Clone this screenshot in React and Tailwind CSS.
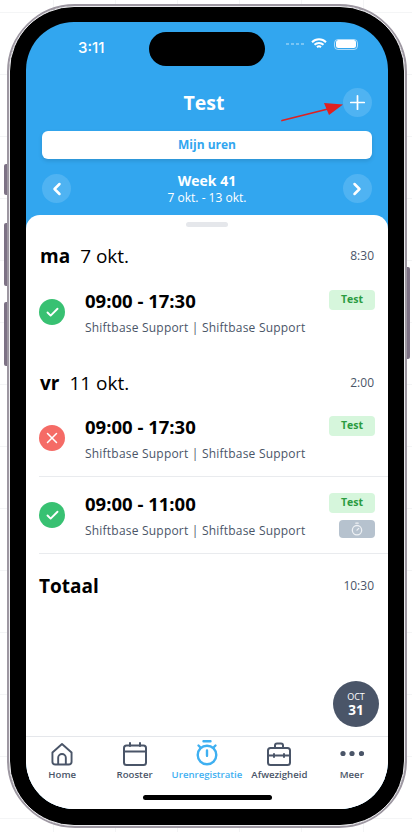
import { Plus, ChevronLeft, ChevronRight, Check, X, Timer } from 'lucide-react';

const days = [
  {
    short: 'ma',
    date: '7 okt.',
    total: '8:30',
    gap: 'mt-[4px] mb-[19px]',
    dateGap: 'ml-[10px]',
    rows: [{ time: '09:00 - 17:30', status: 'ok' }],
  },
  {
    short: 'vr',
    date: '11 okt.',
    total: '2:00',
    gap: 'mt-[3px]',
    dateGap: 'ml-[10px]',
    rows: [
      { time: '09:00 - 17:30', status: 'rejected', divider: true },
      { time: '09:00 - 11:00', status: 'ok', divider: true, timer: true },
    ],
  },
];

const HomeIcon = () => (
  <svg width="22" height="24" viewBox="0 0 23 24" fill="none" stroke="#4a5568" strokeWidth="2" strokeLinejoin="round">
    <path d="M1.5 10.5 L11.5 1.5 L21.5 10.5 V20 a3 3 0 0 1 -3 3 H4.5 a3 3 0 0 1 -3 -3 Z" />
    <path d="M7.5 23 V16 a4 4 0 0 1 8 0 V23" />
  </svg>
);

const CalendarIcon = () => (
  <svg width="24" height="24" viewBox="0 0 24 24" fill="none" stroke="#4a5568" strokeWidth="2" strokeLinecap="round">
    <rect x="1" y="3.5" width="22" height="19.5" rx="2.5" />
    <path d="M1 9.5 H23 M7 1 V4 M17 1 V4" />
  </svg>
);

const StopwatchIcon = () => (
  <svg width="22" height="26" viewBox="0 0 22 26" fill="none" stroke="#3fb0f1" strokeWidth="2.4" strokeLinecap="round">
    <circle cx="11" cy="15" r="9.3" />
    <path d="M7.5 1.2 H14.5 M2.5 5.5 L4.5 7.5 M19.5 5.5 L17.5 7.5 M11 10.5 V15.5" />
    <circle cx="11" cy="16" r="1.1" fill="#3fb0f1" stroke="none" />
  </svg>
);

const BriefcaseIcon = () => (
  <svg width="24" height="24" viewBox="0 0 24 24" fill="none" stroke="#4a5568" strokeWidth="2" strokeLinecap="round">
    <rect x="1" y="6" width="22" height="17" rx="2.5" />
    <path d="M8 6 V3.5 a2 2 0 0 1 2 -2 h4 a2 2 0 0 1 2 2 V6" />
    <path d="M1 13.5 H23" />
    <path d="M7 12 V15 M17 12 V15" />
  </svg>
);

const DotsIcon = () => (
  <svg width="24" height="24" viewBox="0 0 24 24" fill="#4a5568">
    <circle cx="3" cy="11.5" r="2.6" />
    <circle cx="12" cy="11.5" r="2.6" />
    <circle cx="21.5" cy="11.5" r="2.6" />
  </svg>
);

const tabs = [
  { label: 'Home', icon: <HomeIcon /> },
  { label: 'Rooster', icon: <CalendarIcon /> },
  { label: 'Urenregistratie', icon: <StopwatchIcon />, active: true },
  { label: 'Afwezigheid', icon: <BriefcaseIcon /> },
  { label: 'Meer', icon: <DotsIcon /> },
];

const ShiftRow = ({ row }) => (
  <div className={`ml-[13px] flex items-center pt-[13px] pb-[13px] pr-[13px] ${row.divider ? 'border-b border-[#e9ebee]' : ''}`}>
    <div className={`flex h-[26px] w-[26px] shrink-0 items-center justify-center rounded-full ${row.status === 'ok' ? 'bg-[#38c172]' : 'bg-[#f56b66]'}`}>
      {row.status === 'ok' ? <Check size={15} color="white" strokeWidth={3} /> : <X size={18} color="white" strokeWidth={2} />}
    </div>
    <div className="ml-[20px] flex-1">
      <div className="h-[28px] text-[18.5px] leading-[28px] font-bold text-black">{row.time}</div>
      <div className="mt-[4px] h-[18px] text-[12px] leading-[18px] font-medium tracking-[0.21px] text-[#4a5568]">
        Shiftbase Support | Shiftbase Support
      </div>
    </div>
    <div className="flex h-[50px] flex-col items-end self-start pt-[3px]">
      <div className="flex h-[20px] w-[46px] items-center justify-center rounded-[4px] bg-[#d6f6dc] text-[10.5px] font-bold text-[#2b9c41]">
        Test
      </div>
      {row.timer && (
        <div className="mt-[7px] flex h-[18px] w-[36px] items-center justify-center rounded-[4px] bg-[#b6c2ce]">
          <Timer size={14} color="#eef1f4" strokeWidth={2.2} />
        </div>
      )}
    </div>
  </div>
);

const App = () => {
  return (
    <div className="relative h-[832px] w-[412px] overflow-hidden bg-white bg-[linear-gradient(#f4f5f6_1px,transparent_1px),linear-gradient(90deg,#f4f5f6_1px,transparent_1px)] bg-[size:62px_62px] bg-[position:53px_12px] pt-[4px] pl-[7px] font-['Open_Sans',sans-serif]">
      {/* Side buttons */}
      <div className="absolute top-[164px] left-[4px] h-[31px] w-[4px] rounded-l-[2px] bg-[#7d7285]" />
      <div className="absolute top-[223px] left-[4px] h-[63px] w-[4px] rounded-l-[2px] bg-[#7d7285]" />
      <div className="absolute top-[302px] left-[4px] h-[64px] w-[4px] rounded-l-[2px] bg-[#7d7285]" />
      <div className="absolute top-[267px] left-[406px] h-[92px] w-[4px] rounded-r-[2px] bg-[#7d7285]" />

      {/* Phone frame */}
      <div className="relative h-[824px] w-[400px] rounded-[68px] border-2 border-[#9d97a1] bg-[#ececef]">
        <div className="h-full w-full rounded-[65px] border border-[#ececef] bg-black pt-[15px] pr-[16px] pb-[16px] pl-[16px]">
          <div className="relative flex h-[787px] w-[362px] flex-col overflow-hidden rounded-[48px] bg-[#32a6ef]">
            {/* Status bar */}
            <div className="flex h-[44px] items-start pt-[10px]">
              <div className="w-[123px] pt-[5px] pl-[52px] font-['Inter',sans-serif] text-[15px] leading-[22px] font-medium text-white">3:11</div>
              <div className="h-[34px] w-[116px] rounded-[17px] bg-black" />
              <div className="flex items-center pt-[6px] pl-[21px]">
                <div className="flex w-[25px] gap-[2px]">
                  <span className="h-[2px] w-[3px] bg-white/35" />
                  <span className="h-[2px] w-[3px] bg-white/35" />
                  <span className="h-[2px] w-[3px] bg-white/35" />
                  <span className="h-[2px] w-[3px] bg-white/35" />
                </div>
                <svg width="16" height="12" viewBox="0 0 16 12" fill="none" stroke="white" strokeWidth="2">
                  <path d="M1 4.2 a10 10 0 0 1 14 0 M3.5 6.8 a6.5 6.5 0 0 1 9 0 M6 9.2 a3 3 0 0 1 4 0" />
                </svg>
                <div className="ml-[7px] flex h-[11px] w-[24px] items-center justify-center rounded-[4px] border border-white/60">
                  <div className="h-[7.5px] w-[20px] rounded-[2.5px] bg-white" />
                </div>
              </div>
            </div>

            {/* Title */}
            <div className="mt-[22px] flex h-[29px] items-center justify-between pr-[16px] pl-[16px]">
              <span className="w-[29px]" />
              <h1 className="mr-[6px] text-[19.5px] font-bold text-white">Test</h1>
              <button className="flex h-[29px] w-[29px] items-center justify-center rounded-full bg-[#4fb3f2]">
                <Plus size={23} color="white" strokeWidth={1.8} />
              </button>
            </div>

            {/* Mijn uren */}
            <div className="mx-[16px] mt-[14px] flex h-[28px] items-center justify-center rounded-[6px] bg-white text-[12px] font-bold text-[#32a6ef] shadow-[0_2px_4px_rgba(0,0,0,0.12)]">
              Mijn uren
            </div>

            {/* Week switcher */}
            <div className="mx-[16px] mt-[15px] flex h-[29px] items-center justify-between">
              <button className="flex h-[29px] w-[29px] items-center justify-center rounded-full bg-[#4fb3f2]">
                <ChevronLeft size={20} color="white" strokeWidth={3} />
              </button>
              <div className="flex flex-col items-center text-white">
                <div className="text-[14px] leading-[18px] font-bold">Week 41</div>
                <div className="text-[12px] leading-[16px]">7 okt. - 13 okt.</div>
              </div>
              <button className="flex h-[29px] w-[29px] items-center justify-center rounded-full bg-[#4fb3f2]">
                <ChevronRight size={20} color="white" strokeWidth={3} />
              </button>
            </div>

            {/* Sheet */}
            <div className="mt-[12px] flex flex-1 flex-col rounded-t-[14px] bg-white">
              <div className="flex-1">
                <div className="mx-auto mt-[7px] h-[5px] w-[42px] rounded-full bg-[#e5e7eb]" />
                <div className="mt-[15px]">
                  {days.map((day) => (
                    <div key={day.short}>
                      <div className="flex h-[28px] items-center justify-between pr-[14px] pl-[14px] text-black">
                        <div className="flex items-center text-[19px] leading-[28px]">
                          <span className="font-bold">{day.short}</span>
                          <span className={day.dateGap}>{day.date}</span>
                        </div>
                        <span className="text-[12px] text-[#4a5568]">{day.total}</span>
                      </div>
                      <div className={day.gap}>
                        {day.rows.map((row, i) => (
                          <ShiftRow key={i} row={row} />
                        ))}
                      </div>
                    </div>
                  ))}
                </div>
                <div className="mt-[18px] flex h-[28px] items-center justify-between pr-[14px] pl-[13px]">
                  <span className="text-[19px] font-bold text-black">Totaal</span>
                  <span className="text-[12px] text-[#4a5568]">10:30</span>
                </div>
              </div>

              {/* Tab bar */}
              <div className="h-[73px] border-t border-[#e5e7eb] bg-white">
                <div className="flex">
                  {tabs.map((tab) => (
                    <div key={tab.label} className="flex w-[72.4px] flex-col items-center">
                      <div className="flex h-[29px] items-end justify-center">{tab.icon}</div>
                      <div className={`mt-[2px] text-[9.6px] leading-[14px] font-semibold whitespace-nowrap ${tab.active ? 'text-[#3fb0f1]' : 'text-[#4a5568]'}`}>
                        {tab.label}
                      </div>
                    </div>
                  ))}
                </div>
                <div className="mx-auto mt-[13px] h-[5px] w-[129px] rounded-full bg-black" />
              </div>
            </div>

            {/* Date bubble */}
            <div className="absolute right-[9px] bottom-[82px] flex h-[46px] w-[46px] flex-col items-center justify-center rounded-full bg-[#4a5568] text-white">
              <div className="text-[9px] leading-[12px]">OCT</div>
              <div className="text-[13.5px] leading-[14px] font-bold">31</div>
            </div>

            {/* Red arrow annotation */}
            <svg className="absolute top-[78px] left-[254px]" width="70" height="30" viewBox="0 0 70 30">
              <path d="M2 20.5 L50 8.5" stroke="#e02020" strokeWidth="1.8" strokeLinecap="round" />
              <path d="M63 4.5 L44 3 L49 15 Z" fill="#e02020" />
            </svg>
          </div>
        </div>
      </div>
    </div>
  );
};

export default App;
